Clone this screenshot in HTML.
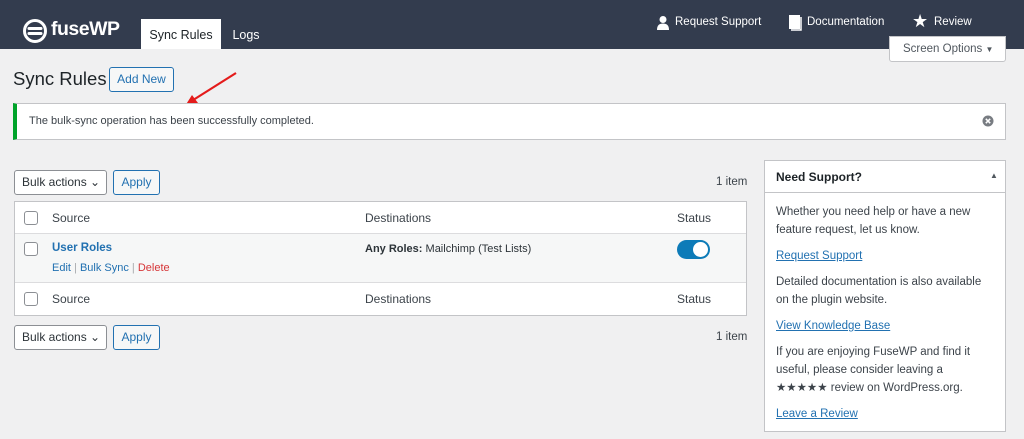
<!DOCTYPE html>
<html><head><meta charset="utf-8"><style>
*{box-sizing:border-box;margin:0;padding:0}
body{width:1024px;height:439px;background:#f0f0f1;font-family:"Liberation Sans",sans-serif;font-size:12px;color:#3c434a;position:relative;overflow:hidden}
.hdr{position:absolute;left:0;top:0;width:1024px;height:49px;background:#333c4e}
.abs{position:absolute;white-space:nowrap}
.tab{position:absolute;top:19px;height:30px;font-size:12px;font-weight:bold;line-height:32px;white-space:nowrap;text-align:center}
.btn{position:absolute;border:1px solid #2271b1;color:#2271b1;border-radius:3px;background:#f6f7f7;text-align:center;font-size:12px}
.sel{position:absolute;border:1px solid #8c8f94;border-radius:3px;background:#fff;font-size:12px;color:#2c3338;padding-left:7px;white-space:nowrap}
.cb{position:absolute;width:14px;height:14px;border:1px solid #8c8f94;border-radius:3px;background:#fff}
a{color:#2271b1}
</style></head><body>
<div class="hdr"></div>
<svg class="abs" style="left:22px;top:18px" width="26" height="26" viewBox="0 0 26 26"><circle cx="13" cy="13" r="10.5" fill="none" stroke="#fff" stroke-width="3"/><path d="M7 10.5h12M7 15.5h12" stroke="#fff" stroke-width="3" stroke-linecap="round"/></svg>
<div class="abs" style="left:51px;top:18px;color:#fff;font-size:19.5px;font-weight:bold;letter-spacing:-0.5px">fuseWP</div>
<div class="tab" style="left:141px;width:80px;color:#1d2327;background:#fff;font-weight:normal;font-size:12.5px">Sync Rules</div>
<div class="tab" style="left:226px;width:40px;color:#fff;font-weight:normal;font-size:12.5px">Logs</div>
<svg class="abs" style="left:656px;top:15px" width="14" height="16" viewBox="0 0 14 16"><circle cx="7" cy="4.5" r="3.5" fill="#fff"/><path d="M1 15c0-5 2.5-6.5 6-6.5s6 1.5 6 6.5z" fill="#fff"/></svg>
<div class="abs" style="left:675px;top:16px;color:#fff;font-size:11.5px">Request Support</div>
<svg class="abs" style="left:788px;top:14px" width="15" height="17" viewBox="0 0 15 17"><rect x="1" y="1" width="11" height="14" fill="#fff"/><path d="M13 3v13H3" stroke="#fff" stroke-width="1.5" fill="none"/></svg>
<div class="abs" style="left:807px;top:16px;color:#fff;font-size:11.5px">Documentation</div>
<div class="abs" style="left:912px;top:11px;color:#fff;font-size:18px">★</div>
<div class="abs" style="left:934px;top:16px;color:#fff;font-size:11.5px">Review</div>
<div class="abs" style="left:889px;top:36px;width:117px;height:26px;background:#fff;border:1px solid #c3c4c7;border-radius:0 0 3px 3px;font-size:11.5px;line-height:24px;padding-left:13px;color:#50575e">Screen Options <span style="font-size:8px">▼</span></div>
<div class="abs" style="left:13px;top:68px;font-size:18.5px;color:#1d2327">Sync Rules</div>
<div class="btn" style="left:109px;top:67px;width:65px;height:25px;line-height:23px">Add New</div>
<svg class="abs" style="left:180px;top:70px" width="60" height="40"><path d="M56 3L10 32" stroke="#e41b1b" stroke-width="2.2"/><path d="M5 36l13-3-6-8z" fill="#e41b1b"/></svg>
<div class="abs" style="left:13px;top:103px;width:993px;height:37px;background:#fff;border:1px solid #c3c4c7;border-left:4px solid #00a32a;line-height:35px;padding-left:12px;font-size:11px;color:#3c434a">The bulk-sync operation has been successfully completed.</div>
<svg class="abs" style="left:982px;top:115px" width="12" height="12"><circle cx="6" cy="6" r="5.5" fill="#787c82"/><path d="M3.8 3.8l4.4 4.4M8.2 3.8l-4.4 4.4" stroke="#fff" stroke-width="1.5"/></svg>

<div class="sel" style="left:14px;top:170px;width:93px;height:25px;line-height:23px">Bulk actions ⌄</div>
<div class="btn" style="left:113px;top:170px;width:47px;height:25px;line-height:23px">Apply</div>
<div class="abs" style="left:716px;top:176px;font-size:11.5px">1 item</div>
<div class="abs" style="left:14px;top:201px;width:733px;height:115px;border:1px solid #c3c4c7;background:#fff"></div>
<div class="abs" style="left:15px;top:233px;width:731px;height:50px;background:#f6f7f7;border-top:1px solid #dcdcde;border-bottom:1px solid #dcdcde"></div>
<div class="cb" style="left:24px;top:211px"></div>
<div class="abs" style="left:52px;top:211px;font-size:12px">Source</div>
<div class="abs" style="left:365px;top:211px;font-size:12px">Destinations</div>
<div class="abs" style="left:677px;top:211px;font-size:12px">Status</div>
<div class="cb" style="left:24px;top:242px"></div>
<div class="abs" style="left:52px;top:242px;color:#2271b1;font-weight:bold;font-size:11.5px">User Roles</div>
<div class="abs" style="left:52px;top:262px;font-size:11px;color:#a7aaad"><span style="color:#2271b1">Edit</span> | <span style="color:#2271b1">Bulk Sync</span> | <span style="color:#d63638">Delete</span></div>
<div class="abs" style="left:365px;top:243px;font-size:11px;color:#2c3338"><b>Any Roles:</b> Mailchimp (Test Lists)</div>
<div class="abs" style="left:677px;top:240px;width:33px;height:19px;border-radius:10px;background:#0d7bb8"><div style="position:absolute;right:2px;top:2px;width:15px;height:15px;border-radius:50%;background:#fff"></div></div>
<div class="cb" style="left:24px;top:292px"></div>
<div class="abs" style="left:52px;top:292px;font-size:12px">Source</div>
<div class="abs" style="left:365px;top:292px;font-size:12px">Destinations</div>
<div class="abs" style="left:677px;top:292px;font-size:12px">Status</div>
<div class="sel" style="left:14px;top:325px;width:93px;height:25px;line-height:23px">Bulk actions ⌄</div>
<div class="btn" style="left:113px;top:325px;width:47px;height:25px;line-height:23px">Apply</div>
<div class="abs" style="left:716px;top:331px;font-size:11.5px">1 item</div>

<div class="abs" style="left:764px;top:160px;width:242px;height:272px;background:#fff;border:1px solid #c3c4c7"></div>
<div class="abs" style="left:765px;top:192px;width:240px;border-top:1px solid #c3c4c7"></div>
<div class="abs" style="left:776px;top:170px;font-weight:bold;font-size:12px;color:#1d2327">Need Support?</div>
<div class="abs" style="left:990px;top:171px;font-size:8px;color:#50575e">▲</div>
<div class="abs" style="left:776px;top:203px;width:218px;font-size:11.5px;line-height:18px;color:#3c434a;white-space:normal">
Whether you need help or have a new feature request, let us know.
<div style="margin-top:8px"><a style="text-decoration:underline">Request Support</a></div>
<div style="margin-top:8px">Detailed documentation is also available on the plugin website.</div>
<div style="margin-top:8px"><a style="text-decoration:underline">View Knowledge Base</a></div>
<div style="margin-top:8px">If you are enjoying FuseWP and find it useful, please consider leaving a ★★★★★ review on WordPress.org.</div>
<div style="margin-top:8px"><a style="text-decoration:underline">Leave a Review</a></div>
</div>
</body></html>
